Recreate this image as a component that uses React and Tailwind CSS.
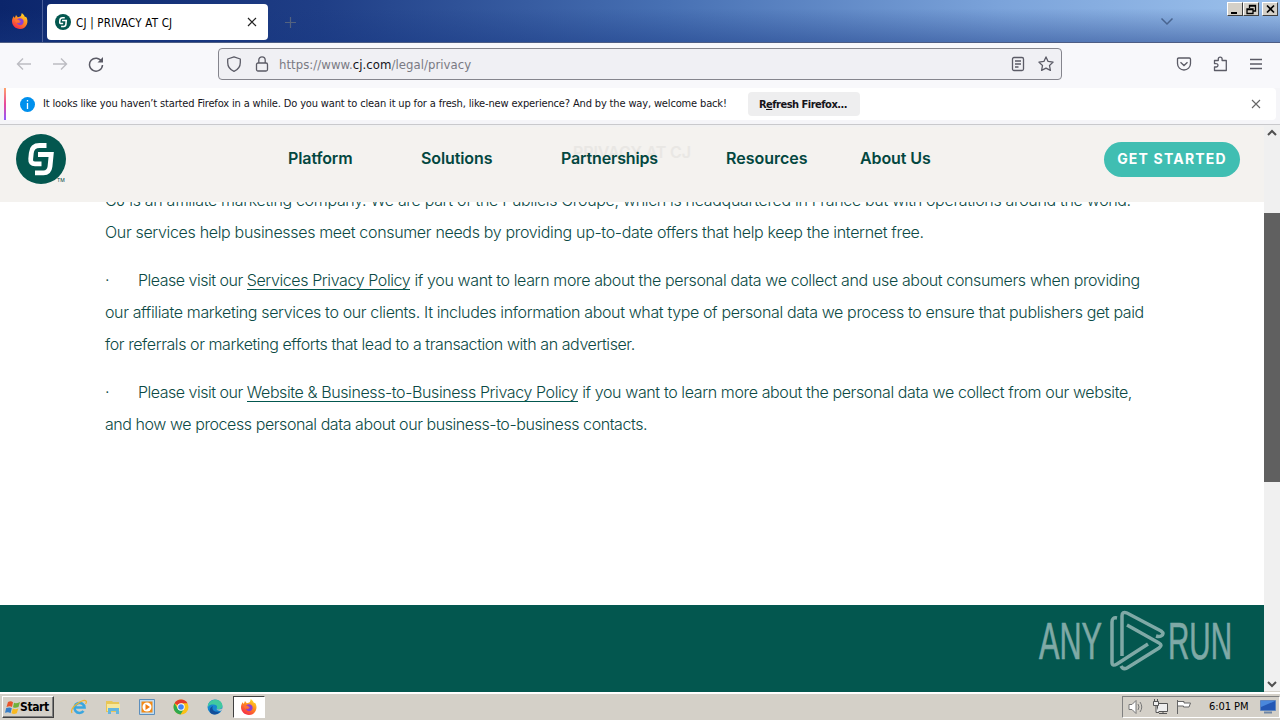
import React from "react";

const bodyLine = "flex h-8 items-center whitespace-pre";

function FirefoxLogo({ size = 16, id }) {
  return (
    <svg width={size} height={size} viewBox="0 0 16 16">
      <defs>
        <linearGradient id={id} x1="0.8" y1="0" x2="0.2" y2="1">
          <stop offset="0" stopColor="#ffe226" />
          <stop offset="0.45" stopColor="#ff8a1e" />
          <stop offset="1" stopColor="#f5204e" />
        </linearGradient>
      </defs>
      <path
        d="M1.6 3.2 2.8 5 4 2l1.8 2.2C7 4 8 4 9 2.8L9.8 0C12 1.6 12.5 3 13 4l1-.3c1.7 2.3 2 5.5.7 8C13.5 14.4 11 16 8 16 3.6 16 0 12.6 0 8.3 0 6.4.6 4.7 1.6 3.2Z"
        fill={`url(#${id})`}
      />
      <path d="M5 6.5C6.5 5 9 4.8 10.6 6.3c1.5 1.5 1.3 4-.2 5.2-2 1.4-5 .5-5.6-1.7.9.6 1.8.5 2.7-.1L9 8.6 6.8 8Z" fill="#8a3fd6" />
      <path d="M1.5 4c0 2 1.4 2.7 3.5 2.5l2.8.6c-.3 1.1-1.5 1.3-2.4 1.8-.5.3-.6.9-.6.9C3.2 9 2.3 7 1.5 4Z" fill="#ff7139" />
    </svg>
  );
}

function CjLogo({ size = 50 }) {
  return (
    <svg width={size} height={size} viewBox="0 0 50 50">
      <circle cx="25" cy="25" r="25" fill="#03574f" />
      <path d="M30.5 11.5H23.5Q16 11.5 15.3 19L14.7 25Q14.3 29.8 19 29.8H25.5" fill="none" stroke="#fff" strokeWidth="4.8" />
      <path d="M22 20.5H35.2L34 32.5Q33.3 38.8 27.5 38.8H19" fill="none" stroke="#fff" strokeWidth="4.8" />
    </svg>
  );
}

function TitleBar() {
  return (
    <div className="flex h-[43px] items-start border-b border-[#4d5d84] bg-[linear-gradient(180deg,transparent_20%,rgba(24,56,130,0.45)_100%),linear-gradient(90deg,#0b256b_0%,#1f3e86_25%,#4770b3_52%,#7ba3da_78%,#9cc1ec_100%)]">
      <div className="flex h-full w-[43px] items-center justify-center border-r border-[#4a5f9a] pr-[2px]">
        <FirefoxLogo id="fxTab" />
      </div>
      <div className="mt-1 ml-1 flex h-9 w-[221px] items-center rounded bg-white pr-[11px] pl-2">
        <CjLogo size={16} />
        <span className="ml-[5px] flex-1 pt-[3px] text-[11.5px] tracking-[0.2px] whitespace-nowrap text-black">CJ | PRIVACY AT CJ</span>
        <svg width="10" height="10" viewBox="0 0 10 10" stroke="#222" strokeWidth="1.2">
          <path d="M1 1l8 8M9 1L1 9" />
        </svg>
      </div>
      <svg className="mt-4 ml-4" width="13" height="13" viewBox="0 0 13 13" stroke="#53627f" strokeWidth="1.2">
        <path d="M6.5 1v11M1 6.5h11" />
      </svg>
      <svg className="mt-[17px] ml-auto" width="14" height="9" viewBox="0 0 14 9" fill="none" stroke="#49648f" strokeWidth="1.5">
        <path d="M1.5 1.5 7 7l5.5-5.5" />
      </svg>
      <div className="mt-[2px] mr-[2px] ml-[53px] flex">
        <WindowButton>
          <path d="M3 10h6" strokeWidth="2" />
        </WindowButton>
        <WindowButton>
          <path d="M5.5 5V2.5h6V8H9M5 3h7M3 6h6v4.5H3zM3 6.5h6" strokeWidth="1.3" />
        </WindowButton>
        <div className="w-[3px]" />
        <WindowButton>
          <path d="M4 2.5l7 7M11 2.5l-7 7" strokeWidth="1.7" />
        </WindowButton>
      </div>
    </div>
  );
}

function WindowButton({ children }) {
  return (
    <div className="h-[14px] w-4 border border-t-white border-r-[#404040] border-b-[#404040] border-l-white bg-[#d4d0c8]">
      <svg width="14" height="12" viewBox="0 0 14 12" fill="none" stroke="#000">
        {children}
      </svg>
    </div>
  );
}

function NavBar() {
  return (
    <div className="flex h-[45px] items-center bg-[#f8f8fb] pr-[17px] pb-[3px] pl-4 text-[#5b5b66]">
      <svg width="16" height="16" viewBox="0 0 16 16" fill="none" stroke="#bcbcc2" strokeWidth="1.4">
        <path d="M15 8H1.5M7 2.5 1.5 8 7 13.5" />
      </svg>
      <svg className="ml-5" width="16" height="16" viewBox="0 0 16 16" fill="none" stroke="#bcbcc2" strokeWidth="1.4">
        <path d="M1 8h13.5M9 2.5 14.5 8 9 13.5" />
      </svg>
      <svg className="ml-5" width="16" height="16" viewBox="0 0 16 16" fill="none" stroke="#5b5b66" strokeWidth="1.5">
        <path d="M13.7 5.5A6.5 6.5 0 1 0 14.5 9" />
        <path d="M15 1v5.5H9.5Z" fill="#5b5b66" stroke="none" />
      </svg>
      <div className="ml-[114px] flex h-8 w-[844px] items-center rounded border border-[#85858d] bg-[#f0f0f4] pr-[7px] pl-[7px]">
        <svg width="16" height="16" viewBox="0 0 16 16" fill="none" stroke="#5b5b66" strokeWidth="1.3" strokeLinejoin="round">
          <path d="M8 .8 14.3 3v3.5c0 4-2.3 7.2-6.3 8.9C4 13.7 1.7 10.5 1.7 6.5V3Z" />
        </svg>
        <svg className="ml-3" width="16" height="16" viewBox="0 0 16 16" fill="none" stroke="#5b5b66" strokeWidth="1.3">
          <rect x="2.5" y="7" width="11" height="8" rx="1.5" />
          <path d="M4.8 7V4a3.2 3.2 0 0 1 6.4 0v3" />
        </svg>
        <span className="ml-[9px] flex-1 pt-px text-[13px] tracking-[0.05px] text-[#7a7a83]">
          https://www.<span className="text-[#15141a]">cj.com</span>/legal/privacy
        </span>
        <svg width="16" height="16" viewBox="0 0 16 16" fill="none" stroke="#5b5b66" strokeWidth="1.3">
          <rect x="2.5" y="1.5" width="11" height="13" rx="1.5" />
          <path d="M5 5h6M5 8h6M5 11h3.5" />
        </svg>
        <svg className="ml-3" width="16" height="16" viewBox="0 0 16 16" fill="none" stroke="#5b5b66" strokeWidth="1.3" strokeLinejoin="round">
          <path d="m8 .9 2.1 4.5 5 .7-3.6 3.4.9 4.9L8 12.1l-4.4 2.3.9-4.9L.9 6.100l5-.7Z" />
        </svg>
      </div>
      <svg className="mr-px ml-auto" width="16" height="16" viewBox="0 0 16 16" fill="none" stroke="#5b5b66" strokeWidth="1.3">
        <path d="M2.7 2h10.6q1.2 0 1.2 1.2V7.5a6.5 6.5 0 0 1-13 0V3.200Q1.500 2 2.700 2ZM4.500 6.200 8 9.500l3.500-3.300" />
      </svg>
      <svg className="ml-5" width="16" height="16" viewBox="0 0 16 16" fill="none" stroke="#5b5b66" strokeWidth="1.3" strokeLinejoin="round">
        <path d="M1.5 7.5V4.5h3.8V3a1.9 1.9 0 0 1 3.800 0v1.500h4.200v10H1.500V11h1.800a1.700 1.700 0 0 0 0-3.400Z" />
      </svg>
      <svg className="ml-5" width="14" height="16" viewBox="0 0 14 16" stroke="#5b5b66" strokeWidth="1.3">
        <path d="M1 3.500h12M1 8h12M1 12.500h12" />
      </svg>
    </div>
  );
}

function RefreshNotice() {
  return (
    <div className="flex h-[37px] flex-col border-b border-[#c9c9cc] bg-[#f5f5f8]">
      <div className="ml-1 flex h-8 w-[1272px] items-center rounded bg-white">
        <div className="h-8 w-[2px] bg-[linear-gradient(#ffa36b,#e8489a_50%,#9059ff)]" />
        <svg className="ml-[14px]" width="15" height="15" viewBox="0 0 15 15">
          <circle cx="7.5" cy="7.5" r="7.5" fill="#0090ed" />
          <path d="M7.5 3v1.5M7.5 6v6" stroke="#fff" strokeWidth="1.3" />
        </svg>
        <span className="ml-2 w-[705px] text-[11px] tracking-[-0.15px] whitespace-nowrap text-[#15141a]">
          It looks like you haven’t started Firefox in a while. Do you want to clean it up for a fresh, like-new experience? And by the way, welcome back!
        </span>
        <button className="flex h-6 w-28 items-center justify-center rounded bg-[#eeeeef] pt-[2px] pr-[2px] text-[11px] font-bold tracking-[-0.5px] text-[#15141a]">
          R<span className="underline">e</span>fresh Firefox...
        </button>
        <svg className="mr-[15px] ml-auto" width="10" height="10" viewBox="0 0 10 10" stroke="#666" strokeWidth="1.1">
          <path d="M1 1l8 8M9 1L1 9" />
        </svg>
      </div>
    </div>
  );
}

function SiteHeader() {
  return (
    <header className="absolute inset-x-0 top-0 flex h-[77px] border-t-2 border-[#f1f1f1] bg-[#f4f2ef] font-['Inter'] text-[16px] font-semibold text-[#03473f]">
      <span className="absolute top-[15px] left-[573px] text-[16px] leading-5 tracking-[-0.15px] text-[#e9e7e4]">PRIVACY AT CJ</span>
      <div className="relative ml-4 flex w-[272px] pt-[7px]">
        <CjLogo />
        <span className="mt-[43px] -ml-[9px] text-[5px] leading-[6px] font-normal">TM</span>
      </div>
      <nav className="relative flex pt-[21px] leading-5 tracking-[-0.1px] whitespace-nowrap">
        <span className="w-[133px]">Platform</span>
        <span className="w-[140px]">Solutions</span>
        <span className="w-[165px] tracking-[-0.15px]">Partnerships</span>
        <span className="w-[134px] tracking-normal">Resources</span>
        <span>About Us</span>
      </nav>
      <button className="mt-[15px] mr-6 ml-auto h-[35px] w-[136px] rounded-full bg-[#40beb2] pb-[2px] text-[14px] font-bold tracking-[1.2px] text-white">
        GET STARTED
      </button>
    </header>
  );
}

function PrivacyText() {
  return (
    <main className="h-[480px] bg-white pt-[59px] pl-[105px] font-['Inter'] text-[16px] font-light text-[#0c4a45]">
      <p className="mb-4">
        <span className={`${bodyLine} tracking-[-0.32px]`}>CJ is an affiliate marketing company. We are part of the Publicis Groupe, which is headquartered in France but with operations around the world.</span>
        <span className={`${bodyLine} tracking-[-0.33px]`}>Our services help businesses meet consumer needs by providing up-to-date offers that help keep the internet free.</span>
      </p>
      <p className="mb-4">
        <span className={`${bodyLine} tracking-[-0.37px]`}>
          <span className="w-[33px]">·</span>
          <span className="tracking-[-0.49px]">Please visit our </span>
          <a className="border-b border-[#03574f] leading-[18px] tracking-[-0.4px]">Services Privacy Policy</a>
          <span> if you want to learn more about the personal data we collect and use about consumers when providing</span>
        </span>
        <span className={`${bodyLine} tracking-[-0.365px]`}>our affiliate marketing services to our clients. It includes information about what type of personal data we process to ensure that publishers get paid</span>
        <span className={`${bodyLine} tracking-[-0.42px]`}>for referrals or marketing efforts that lead to a transaction with an advertiser.</span>
      </p>
      <p>
        <span className={`${bodyLine} tracking-[-0.38px]`}>
          <span className="w-[33px]">·</span>
          <span className="tracking-[-0.49px]">Please visit our </span>
          <a className="border-b border-[#03574f] leading-[18px] tracking-[-0.4px]">Website &amp; Business-to-Business Privacy Policy</a>
          <span> if you want to learn more about the personal data we collect from our website,</span>
        </span>
        <span className={`${bodyLine} tracking-[-0.43px]`}>and how we process personal data about our business-to-business contacts.</span>
      </p>
    </main>
  );
}

function Watermark() {
  return (
    <svg className="mt-[5px] mr-[27px] overflow-visible" width="200" height="68" viewBox="0 0 200 68" fill="none" stroke="#7fa9a6">
      <g fill="#7fa9a6" strokeWidth="0.7" fontFamily="Liberation Sans Narrow, Liberation Sans" fontSize="52">
        <text x="2" y="49" textLength="63" lengthAdjust="spacingAndGlyphs">ANY</text>
        <text x="131" y="49" textLength="64" lengthAdjust="spacingAndGlyphs">RUN</text>
      </g>
      <path
        d="M80 8Q75 7 75 12V52Q75 57 80 54L111 34M85 46V6Q85 1 90 3L124 21Q128 24 124 26Q122 27 119 26M90 15 122 33Q126 35 122 38L90 58Q86 60 84 56"
        strokeWidth="3.5"
      />
    </svg>
  );
}

function Scrollbar() {
  return (
    <div className="flex w-4 flex-col items-center bg-[#f0f0f0]">
      <svg className="mt-1" width="10" height="7" viewBox="0 0 10 7" fill="none" stroke="#505050" strokeWidth="2">
        <path d="M1 6l4-4 4 4" />
      </svg>
      <div className="mt-[77px] h-[269px] w-4 bg-[#606060]" />
      <svg className="mt-auto mb-1" width="10" height="7" viewBox="0 0 10 7" fill="none" stroke="#505050" strokeWidth="2">
        <path d="M1 1l4 4 4-4" />
      </svg>
    </div>
  );
}

function Taskbar() {
  return (
    <div className="flex h-7 items-start border-t-2 border-white bg-[#d4d0c8] pt-[2px] text-black shadow-[0_-1px_0_#d4d0c8]">
      <div className="ml-[2px] flex h-[22px] w-[52px] items-center border border-t-white border-r-[#404040] border-b-[#404040] border-l-white shadow-[inset_-1px_-1px_0_#808080]">
        <svg className="ml-[2px] shrink-0" width="15" height="15" viewBox="0 0 15 15">
          <path d="M3 2q3-1.5 5 .2L7 7Q5 5.5 1.5 7Z" fill="#e9542b" />
          <path d="M9 2.8q2 1.2 6-.8l-1.5 5q-3 1.5-5.5.2Z" fill="#70b13c" />
          <path d="M1.200 8Q5 6.700 6.800 8.200l-1.300 5Q3.500 11.700 0 12.800Z" fill="#377ec8" />
          <path d="M7.800 8.500q2.500 1.500 5.500 0l-1.500 4.800q-3 1.500-5.300 0Z" fill="#f9b920" />
        </svg>
        <span className="text-[12px] font-bold tracking-[-0.4px]">Start</span>
      </div>
      <div className="ml-[17px] flex h-[22px] items-center gap-[18px]">
        <svg width="16" height="16" viewBox="0 0 16 16" fill="none">
          <path d="M3.5 8.5h10A5 5 0 1 0 12.5 12" stroke="#3aa6df" strokeWidth="2.6" />
          <path d="M1 14Q-1 10 6 5T15 2q1 1-.5 3" stroke="#efb42f" strokeWidth="1.2" />
        </svg>
        <svg width="16" height="16" viewBox="0 0 16 16">
          <path d="M1 2h6l1 1h6v10H1Z" fill="#e8c657" />
          <path d="M2 5h13v7H2Z" fill="#f7e79c" />
          <path d="M3 9h11v6h-3v-3H6v3H3Z" fill="#65b6df" />
        </svg>
        <svg width="16" height="16" viewBox="0 0 16 16">
          <path d="M.5.5h15v15H.5z" fill="#bedcf3" stroke="#5c8ebc" />
          <path d="M2.5 2.5h11v11h-11z" fill="#f28a16" />
          <circle cx="8" cy="8" r="4.5" fill="#fff" />
          <path d="M6.5 5v6L11 8Z" fill="#f07c12" />
        </svg>
        <svg width="16" height="16" viewBox="0 0 16 16">
          <circle cx="8" cy="8" r="7.5" fill="#fbc116" />
          <path d="M8 8 1.5 4.3A7.5 7.5 0 0 1 14.5 4.3H8Z" fill="#e33b2e" />
          <path d="M1.5 4.3A7.5 7.5 0 0 0 7.5 15.5L11 9.8 5 10Z" fill="#2da94f" />
          <circle cx="8" cy="8" r="3.7" fill="#fff" />
          <circle cx="8" cy="8" r="2.8" fill="#4285f4" />
        </svg>
        <svg width="16" height="16" viewBox="0 0 16 16">
          <circle cx="8" cy="8" r="7.5" fill="#1787d0" />
          <path d="M1 6C3-1 15-1 15.5 7c0 3-4 4-6 2.5 1.5-2 0-4-3-4C4 5.5 2 6 1 8Z" fill="#41c9a0" />
          <path d="M6 7c-2 3 1 7 7 5.5-2 3-6 4-9 2C1.5 12 3 8 6 7Z" fill="#124d99" />
          <path d="M9.3 9.7q3 2 6-.4l-.8 2.2q-4 1-5.2-1.8Z" fill="#d4d0c8" />
        </svg>
      </div>
      <div className="ml-[10px] flex h-[22px] w-8 items-center justify-center border border-t-[#404040] border-r-white border-b-white border-l-[#404040] bg-white">
        <FirefoxLogo id="fxTask" />
      </div>
      <div className="ml-auto flex h-[22px] w-[158px] items-center border border-t-[#808080] border-r-white border-b-white border-l-[#808080] pl-[5px]">
        <svg width="17" height="16" viewBox="0 0 17 16" fill="#fff" stroke="#777">
          <path d="M1 5.5h3L8 1.5v13L4 10.5H1Z" />
          <path d="M10 5q2 3 0 6M12 3q3.5 5 0 10" fill="none" />
        </svg>
        <svg className="ml-[7px]" width="17" height="16" viewBox="0 0 17 16" fill="#eee" stroke="#555">
          <path d="M5.5 4.5h10v8h-10zM7 14.5h8M11 12.5v2" />
          <path d="M1.5 2.5h5v4h-5zM2.5 0v2.5M5.5 0v2.5M4 6.5v7h3" />
        </svg>
        <svg className="ml-[7px]" width="16" height="16" viewBox="0 0 16 16" fill="#fff" stroke="#666">
          <path d="M1.5 1v14M2 2.5h6v1.5h6.5L13 8H7.5V7H2" />
        </svg>
        <span className="ml-[17px] pt-px text-[11px] tracking-[-0.05px] whitespace-nowrap">6:01 PM</span>
        <svg className="mr-[3px] ml-auto" width="16" height="14" viewBox="0 0 16 14">
          <path d="M.5.5h15v10H.5z" fill="#2458b5" stroke="#5f86c0" />
          <path d="M1 1h14L1 7Z" fill="#4a88dc" />
          <path d="M4 12.5h8" stroke="#6f86a5" strokeWidth="2" />
        </svg>
      </div>
    </div>
  );
}

export default function App() {
  return (
    <div className="flex h-[720px] w-[1280px] flex-col overflow-hidden bg-white font-['DejaVu_Sans_Condensed','DejaVu_Sans',sans-serif]">
      <TitleBar />
      <NavBar />
      <RefreshNotice />
      <div className="flex h-[567px]">
        <div className="relative w-[1264px]">
          <SiteHeader />
          <PrivacyText />
          <footer className="flex h-[87px] items-start justify-end bg-[#03574f]">
            <Watermark />
          </footer>
        </div>
        <Scrollbar />
      </div>
      <Taskbar />
    </div>
  );
}
